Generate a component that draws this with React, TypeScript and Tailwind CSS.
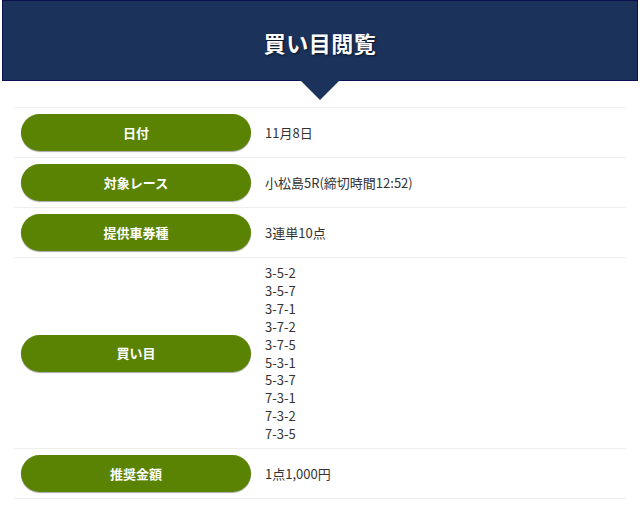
const rows: { label: string; value: string[] }[] = [
  { label: '日付', value: ['11月8日'] },
  { label: '対象レース', value: ['小松島5R(締切時間12:52)'] },
  { label: '提供車券種', value: ['3連単10点'] },
  {
    label: '買い目',
    value: ['3-5-2', '3-5-7', '3-7-1', '3-7-2', '3-7-5', '5-3-1', '5-3-7', '7-3-1', '7-3-2', '7-3-5'],
  },
  { label: '推奨金額', value: ['1点1,000円'] },
];

export default function App() {
  return (
    <div className="w-[640px] h-[525px] bg-white font-['Noto_Sans_CJK_JP','Noto_Sans',sans-serif]">
      {/* Title */}
      <div className="relative mx-[2px] h-[81px] bg-[#1b325b] border border-[#0b1150] flex items-center justify-center">
        <h1 className="mt-[3px] text-[22px] font-bold text-white tracking-[0.5px] [text-shadow:1px_1px_2px_rgba(0,0,0,0.6)]">
          買い目閲覧
        </h1>
        <div className="absolute left-1/2 -translate-x-1/2 top-full w-0 h-0 border-l-[20px] border-r-[20px] border-t-[20px] border-l-transparent border-r-transparent border-t-[#1b325b]" />
      </div>

      {/* Table */}
      <div className="mx-[14px] mt-[26px] border-t border-[#eeeeee]">
        {rows.map((r) => (
          <div key={r.label} className="flex items-center border-b border-[#eeeeee]">
            <div className="ml-[7px] my-[6px] w-[230px] h-[37px] shrink-0 rounded-full bg-[#5a8304] shadow-[0_1px_1px_rgba(0,0,0,0.35)] flex items-center justify-center text-white text-[13px] font-bold">
              {r.label}
            </div>
            <div
              className={
                'ml-[14px] text-[13px] text-[#333333] ' +
                (r.value.length > 1 ? 'pt-[6px] pb-[5px] leading-[17.9px]' : 'leading-[18px]')
              }
            >
              {r.value.map((v) => (
                <div key={v}>{v}</div>
              ))}
            </div>
          </div>
        ))}
      </div>
    </div>
  );
}
